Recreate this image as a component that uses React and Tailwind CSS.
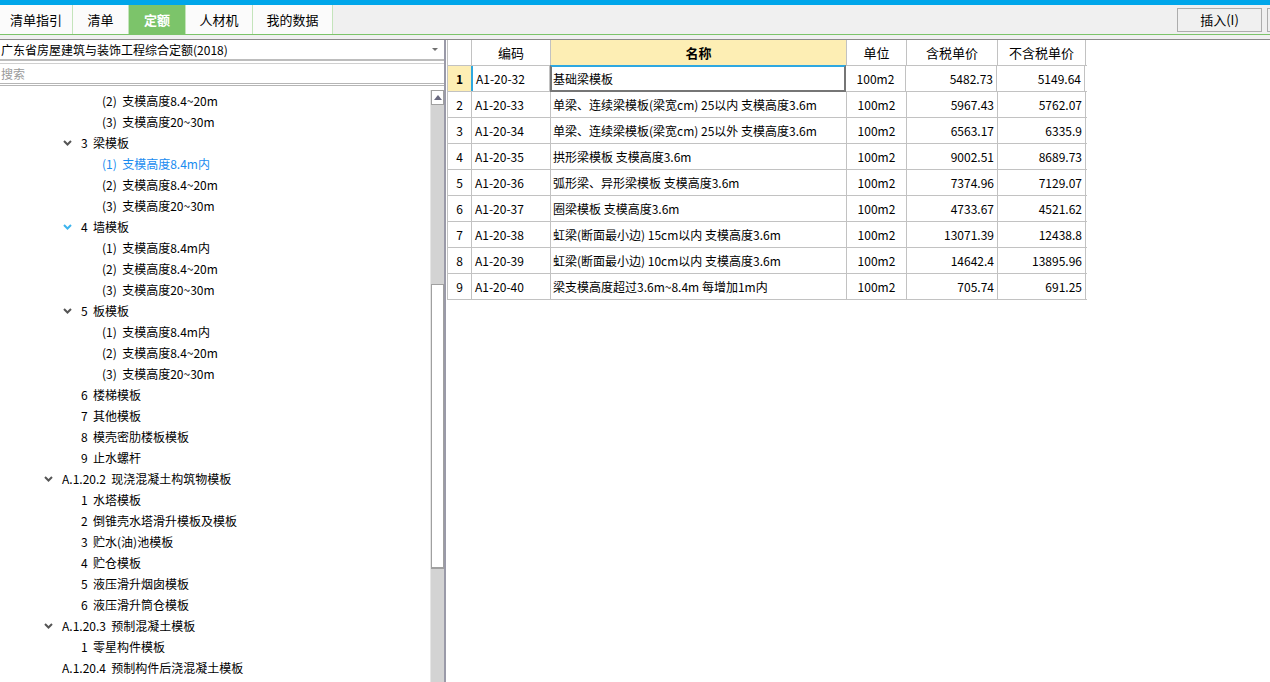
import React from 'react'

const tabs = [
  { label: '清单指引', w: 'w-[73px]' },
  { label: '清单', w: 'w-[56px]' },
  { label: '定额', w: 'w-[57px]', active: true },
  { label: '人材机', w: 'w-[67px]' },
  { label: '我的数据', w: 'w-[80px]' },
]

// level: 1 = A.1.20.x, 2 = numbered item, 3 = (n) sub item
const tree = [
  { lv: 3, text: '(2)  支模高度8.4~20m' },
  { lv: 3, text: '(3)  支模高度20~30m' },
  { lv: 2, text: '3  梁模板', chev: 'gray' },
  { lv: 3, text: '(1)  支模高度8.4m内', active: true },
  { lv: 3, text: '(2)  支模高度8.4~20m' },
  { lv: 3, text: '(3)  支模高度20~30m' },
  { lv: 2, text: '4  墙模板', chev: 'blue' },
  { lv: 3, text: '(1)  支模高度8.4m内' },
  { lv: 3, text: '(2)  支模高度8.4~20m' },
  { lv: 3, text: '(3)  支模高度20~30m' },
  { lv: 2, text: '5  板模板', chev: 'gray' },
  { lv: 3, text: '(1)  支模高度8.4m内' },
  { lv: 3, text: '(2)  支模高度8.4~20m' },
  { lv: 3, text: '(3)  支模高度20~30m' },
  { lv: 2, text: '6  楼梯模板' },
  { lv: 2, text: '7  其他模板' },
  { lv: 2, text: '8  模壳密肋楼板模板' },
  { lv: 2, text: '9  止水螺杆' },
  { lv: 1, text: 'A.1.20.2  现浇混凝土构筑物模板', chev: 'gray' },
  { lv: 2, text: '1  水塔模板' },
  { lv: 2, text: '2  倒锥壳水塔滑升模板及模板' },
  { lv: 2, text: '3  贮水(油)池模板' },
  { lv: 2, text: '4  贮仓模板' },
  { lv: 2, text: '5  液压滑升烟囱模板' },
  { lv: 2, text: '6  液压滑升筒仓模板' },
  { lv: 1, text: 'A.1.20.3  预制混凝土模板', chev: 'gray' },
  { lv: 2, text: '1  零星构件模板' },
  { lv: 1, text: 'A.1.20.4  预制构件后浇混凝土模板' },
]

const rows = [
  ['A1-20-32', '基础梁模板', '100m2', '5482.73', '5149.64'],
  ['A1-20-33', '单梁、连续梁模板(梁宽cm) 25以内 支模高度3.6m', '100m2', '5967.43', '5762.07'],
  ['A1-20-34', '单梁、连续梁模板(梁宽cm) 25以外 支模高度3.6m', '100m2', '6563.17', '6335.9'],
  ['A1-20-35', '拱形梁模板 支模高度3.6m', '100m2', '9002.51', '8689.73'],
  ['A1-20-36', '弧形梁、异形梁模板 支模高度3.6m', '100m2', '7374.96', '7129.07'],
  ['A1-20-37', '圈梁模板 支模高度3.6m', '100m2', '4733.67', '4521.62'],
  ['A1-20-38', '虹梁(断面最小边) 15cm以内 支模高度3.6m', '100m2', '13071.39', '12438.8'],
  ['A1-20-39', '虹梁(断面最小边) 10cm以内 支模高度3.6m', '100m2', '14642.4', '13895.96'],
  ['A1-20-40', '梁支模高度超过3.6m~8.4m 每增加1m内', '100m2', '705.74', '691.25'],
]

const Chevron = ({ color }) => (
  <svg width="9" height="6" viewBox="0 0 9 6" className={color === 'blue' ? 'text-[#3cb4ee]' : 'text-[#555]'}>
    <path d="M1 1 L4.5 4.5 L8 1" fill="none" stroke="currentColor" strokeWidth="2" />
  </svg>
)

const TreeRow = ({ item }) => {
  const pad = item.lv === 1 ? 'pl-[44px]' : item.lv === 2 ? 'pl-[63px]' : 'pl-[102px]'
  return (
    <div className={`h-[21px] flex items-center ${pad}`}>
      {item.lv !== 3 && (
        <span className="w-[18px] flex items-center">{item.chev && <Chevron color={item.chev} />}</span>
      )}
      <span className={`whitespace-pre ${item.active ? 'text-[#1a8cf0]' : 'text-black'}`}>{item.text}</span>
    </div>
  )
}

export default function App() {
  return (
    <div className="w-[1270px] h-[682px] overflow-hidden bg-white flex flex-col font-['Noto_Sans_CJK_SC','Noto_Sans',sans-serif] text-[12px] text-black">
      {/* top strip */}
      <div className="h-[5px] bg-[#00a6ea]" />

      {/* tab bar */}
      <div className="h-[30px] flex bg-[#f0f0f0] border-b border-[#7cc46a]">
        {tabs.map((t) => (
          <div
            key={t.label}
            className={`${t.w} flex items-center justify-center text-[13px] border-r border-[#c4e4bb] ${
              t.active ? 'bg-[#7cc46a] text-white font-bold' : 'bg-[#fbfbfb]'
            }`}
          >
            {t.label}
          </div>
        ))}
        <div className="flex-1" />
        <div className="my-[3px] w-[85px] h-[24px] border border-[#adadad] bg-[#f0f0f0] flex items-center justify-center text-[13px]">
          插入(I)
        </div>
        <div className="ml-[5px] my-[3px] w-[3px] h-[24px] border border-[#adadad] border-r-0 bg-[#f0f0f0]" />
      </div>
      <div className="h-[5px] bg-[#f0f0f0] border-b border-[#8a8a8a]" />

      <div className="flex-1 flex min-h-0">
        {/* left panel */}
        <div className="w-[445px] flex flex-col border-r border-[#9a9aa8]">
          <div className="h-[21px] flex items-center border-b-2 border-[#bdbdbd] bg-white">
            <span className="flex-1 pl-[1px]">广东省房屋建筑与装饰工程综合定额(2018)</span>
            <svg width="8" height="5" viewBox="0 0 8 5" className="mr-[5px]">
              <path d="M1 1 L7 1 L4 4 Z" fill="#6f6f6f" />
            </svg>
          </div>
          <div className="h-[2px]" />
          <div className="h-[23px] flex items-center border-b-[3px] border-double border-[#b5b5b5] border-t border-t-[#d0d0d0] pl-[1px] text-[#9a9a9a]">
            搜索
          </div>
          <div className="flex-1 flex min-h-0 pt-[4px]">
            <div className="flex-1 flex flex-col overflow-hidden">
              {tree.map((item, i) => (
                <TreeRow key={i} item={item} />
              ))}
            </div>
            {/* scrollbar */}
            <div className="w-[14px] flex flex-col bg-[#d3d3d3] border-l border-[#e6e6e6]">
              <div className="h-[15px] bg-white border border-[#a0a0a0] flex items-center justify-center">
                <svg width="8" height="5" viewBox="0 0 8 5">
                  <path d="M0 5 L4 0 L8 5 Z" fill="#6a6a80" />
                </svg>
              </div>
              <div className="h-[179px]" />
              <div className="h-[285px] bg-white border border-[#a0a0a0] border-b-2" />
              <div className="flex-1" />
            </div>
          </div>
        </div>

        {/* right panel */}
        <div className="flex-1 border-l border-[#9a9aa8] pl-[1px] bg-white">
          <div className="flex flex-col w-[640px]">
            <div className="h-[26px] flex border-b border-[#c2c2c2] text-[13px]">
              <div className="w-[25px] border-r border-l border-[#c2c2c2]" />
              <div className="w-[79px] border-r border-[#c2c2c2] flex items-center justify-center">编码</div>
              <div className="w-[296px] border-r border-[#c2c2c2] bg-[#fdeeb4] flex items-center justify-center font-bold">名称</div>
              <div className="w-[60px] border-r border-[#c2c2c2] flex items-center justify-center">单位</div>
              <div className="w-[91px] border-r border-[#c2c2c2] flex items-center justify-center">含税单价</div>
              <div className="w-[88px] border-r border-[#c2c2c2] flex items-center justify-center">不含税单价</div>
            </div>
            {rows.map((r, i) => {
              const first = i === 0
              return (
                <div key={r[0]} className="h-[26px] flex border-b border-[#c2c2c2]">
                  <div
                    className={`w-[25px] border-r border-l border-[#c2c2c2] flex items-center justify-center ${
                      first ? 'bg-[#fdeeb4] font-bold' : ''
                    }`}
                  >
                    {i + 1}
                  </div>
                  <div className={`w-[79px] border-r border-[#c2c2c2] flex items-center pl-[3px] ${first ? 'border-l-2 border-l-[#2ea8e0] -ml-[1px]' : ''}`}>
                    {r[0]}
                  </div>
                  <div
                    className={`w-[296px] flex items-center whitespace-pre ${
                      first
                        ? 'border-2 border-[#767676] border-t-[#2ea8e0] -mt-[1px] h-[27px] pl-[1px]'
                        : 'border-r border-[#c2c2c2] pl-[2px]'
                    }`}
                  >
                    {r[1]}
                  </div>
                  <div className="w-[60px] border-r border-[#c2c2c2] flex items-center justify-center">{r[2]}</div>
                  <div className="w-[91px] border-r border-[#c2c2c2] flex items-center justify-end pr-[3px]">{r[3]}</div>
                  <div className="w-[88px] border-r border-[#c2c2c2] flex items-center justify-end pr-[3px]">{r[4]}</div>
                </div>
              )
            })}
          </div>
        </div>
      </div>
    </div>
  )
}
